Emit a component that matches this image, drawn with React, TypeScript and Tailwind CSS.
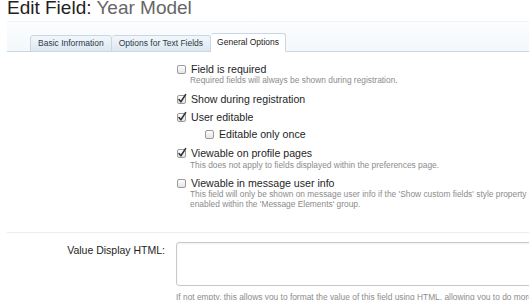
import React from "react";

const font = { fontFamily: '"Liberation Sans", Arial, sans-serif' };

const Box = ({ checked }: { checked?: boolean }) => (
  <svg width="11" height="11" viewBox="0 0 11 11" className="shrink-0 overflow-visible">
    <defs>
      <linearGradient id="cbg" x1="0" y1="0" x2="0" y2="1">
        <stop offset="0" stopColor="#ffffff" />
        <stop offset="1" stopColor="#e4e4e4" />
      </linearGradient>
    </defs>
    <rect x="1.5" y="1.5" width="8" height="8" rx="1.5" fill="url(#cbg)" stroke="#9a9a9a" strokeWidth="1" />
    {checked && (
      <path
        d="M3 5.6 L4.9 7.8 L9.6 0.6"
        fill="none"
        stroke="#333"
        strokeWidth="1.6"
        strokeLinecap="round"
        strokeLinejoin="round"
      />
    )}
  </svg>
);

const Check = ({
  label,
  checked,
  className = "",
}: {
  label: string;
  checked?: boolean;
  className?: string;
}) => (
  <div className={`flex items-center gap-[4px] h-[14px] ${className}`}>
    <Box checked={checked} />
    <span className="text-[10.6px] leading-[14px] text-[#1e1e1e]">{label}</span>
  </div>
);

const Desc = ({ children, className = "" }: { children: React.ReactNode; className?: string }) => (
  <div className={`pl-[14px] text-[8.4px] leading-[10px] text-[#8c8c8c] whitespace-nowrap ${className}`}>
    {children}
  </div>
);

export default function App() {
  return (
    <div className="w-[529px] h-[300px] overflow-hidden bg-white" style={font}>
      <h1 className="mt-[-2px] pl-[7px] text-[19px] leading-[19px] whitespace-nowrap">
        <span className="text-[#222]">Edit Field: </span>
        <span className="text-[#666]">Year Model</span>
      </h1>

      {/* tab strip */}
      <div className="mt-[4px] ml-[7px] h-[31px] flex items-end pl-[23px] border-t border-[#eef3f7] border-b border-b-[#c9d7e4] bg-gradient-to-b from-[#fbfdfe] to-[#f4f8fb]">
        <div className="h-[17px] mb-[-1px] px-[7px] flex items-center border border-[#c9d7e4] rounded-t-[3px] bg-gradient-to-b from-[#f3f7fb] to-[#dce7f1] text-[8.5px] text-[#2b3a48] whitespace-nowrap">
          Basic Information
        </div>
        <div className="h-[17px] mb-[-1px] px-[7px] flex items-center border border-l-0 border-[#c9d7e4] rounded-t-[3px] bg-gradient-to-b from-[#f3f7fb] to-[#dce7f1] text-[8.5px] text-[#2b3a48] whitespace-nowrap">
          Options for Text Fields
        </div>
        <div className="h-[19px] mb-[-1px] px-[6px] flex items-center border border-l-0 border-[#c9d7e4] border-b-white rounded-t-[3px] bg-white text-[8.5px] text-[#222] whitespace-nowrap">
          General Options
        </div>
      </div>

      {/* options */}
      <div className="flex pt-[10px]">
        <div className="w-[165px] shrink-0" />
        <div className="ml-[11px] flex flex-col">
          <Check label="Field is required" />
          <Desc className="mt-[-1px]">Required fields will always be shown during registration.</Desc>
          <Check label="Show during registration" checked className="mt-[7px]" />
          <Check label="User editable" checked className="mt-[4px]" />
          <Check label="Editable only once" className="mt-[3px] ml-[28px]" />
          <Check label="Viewable on profile pages" checked className="mt-[5px]" />
          <Desc className="mt-0">This does not apply to fields displayed within the preferences page.</Desc>
          <Check label="Viewable in message user info" className="mt-[6px]" />
          <Desc className="mt-[-1px]">
            This field will only be shown on message user info if the 'Show custom fields' style property is
            <br />
            enabled within the 'Message Elements' group.
          </Desc>
        </div>
      </div>

      <div className="mt-[23px] ml-[7px] h-px bg-[#e6eef5]" />

      {/* value display html */}
      <div className="flex pt-[9px]">
        <div className="w-[165px] shrink-0 pt-[1px] text-right text-[10.5px] leading-[14px] text-[#1e1e1e] whitespace-nowrap">
          Value Display HTML:
        </div>
        <div className="ml-[11px] flex flex-col">
          <div className="w-[420px] h-[44px] border border-[#c8c8c8] rounded-[3px] bg-white shadow-[inset_0_1px_2px_rgba(0,0,0,0.06)]" />
          <div className="mt-[6px] text-[8.4px] leading-[10px] text-[#8c8c8c] whitespace-nowrap">
            If not empty, this allows you to format the value of this field using HTML, allowing you to do more
          </div>
        </div>
      </div>
    </div>
  );
}
